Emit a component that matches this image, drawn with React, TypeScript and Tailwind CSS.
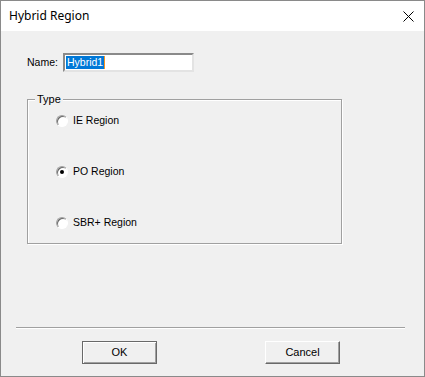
export default function App() {
  const radios = [
    { label: 'IE Region', checked: false },
    { label: 'PO Region', checked: true },
    { label: 'SBR+ Region', checked: false },
  ]

  return (
    <div className="w-[425px] h-[377px] border border-[#8a8a8a] bg-[#f0f0f0] flex flex-col font-['Liberation_Sans',Arial,sans-serif] text-[11px] text-black">
      {/* Title bar */}
      <div className="h-[30px] bg-white flex items-center justify-between pl-[8px] pr-[10px] shrink-0">
        <span className="text-[12px] font-['Noto_Sans','Liberation_Sans',sans-serif]">Hybrid Region</span>
        <svg width="11" height="11" viewBox="0 0 11 11" className="mt-[1px]">
          <path d="M0.5 0.5 L10.5 10.5 M10.5 0.5 L0.5 10.5" stroke="#000" strokeWidth="1" />
        </svg>
      </div>

      {/* Body */}
      <div className="flex-1 flex flex-col">
        <div className="mt-[22px] ml-[26px] flex items-center h-[19px]">
          <span className="w-[36px] text-[10.5px]">Name:</span>
          <div className="w-[131px] h-[19px] bg-white border-2 border-t-[#8a8a8a] border-l-[#8a8a8a] border-b-[#e3e3e3] border-r-[#e3e3e3] flex items-center pl-[1px]">
            <span className="bg-[#0078d7] text-white px-[1px] leading-[13px] text-[10.5px]">Hybrid1</span>
            <span className="w-[1px] h-[13px] bg-[#f7931e]" />
          </div>
        </div>

        {/* Group box */}
        <div className="relative mt-[27px] ml-[26px] w-[315px] h-[145px] border border-[#a0a0a0] shadow-[inset_1px_1px_0_#fff,1px_1px_0_#fff]">
          <span className="absolute -top-[8px] left-[7px] px-[2px] bg-[#f0f0f0] text-[11px] leading-[14px]">Type</span>
          <div className="flex flex-col gap-[38px] pl-[28px] pt-[14px]">
            {radios.map((r) => (
              <div key={r.label} className="flex items-center h-[13px]">
                <div className="w-[12px] h-[12px] rounded-full bg-white border border-t-[#a0a0a0] border-l-[#a0a0a0] border-b-[#fff] border-r-[#fff] shadow-[inset_1px_1px_0_#696969] flex items-center justify-center">
                  {r.checked && <div className="w-[4px] h-[4px] rounded-full bg-black" />}
                </div>
                <span className="ml-[5px] text-[10.5px]">{r.label}</span>
              </div>
            ))}
          </div>
        </div>

        {/* Separator */}
        <div className="mt-[83px] ml-[15px] w-[389px] h-[2px] border-t border-t-[#a0a0a0] border-b border-b-white" />

        {/* Buttons */}
        <div className="mt-[12px] flex">
          <button className="ml-[81px] w-[75px] h-[23px] bg-[#f0f0f0] border border-[#696969] shadow-[inset_1px_1px_0_#fff,inset_-1px_-1px_0_#a0a0a0] text-[11px] leading-none">
            OK
          </button>
          <button className="ml-[108px] w-[75px] h-[23px] bg-[#f0f0f0] border border-t-white border-l-white border-b-[#696969] border-r-[#696969] shadow-[inset_-1px_-1px_0_#a0a0a0] text-[11px] leading-none">
            Cancel
          </button>
        </div>
      </div>
    </div>
  )
}
